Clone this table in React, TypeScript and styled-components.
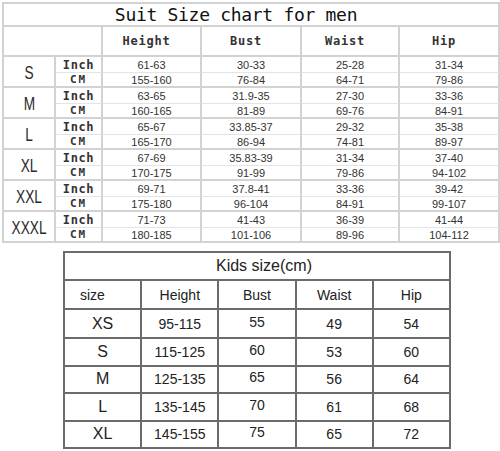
import React from 'react';
import styled, { createGlobalStyle } from 'styled-components';

const Global = createGlobalStyle`
  html, body { margin: 0; padding: 0; background: #fff; }
  body {
    font-family: "Liberation Sans", Arial, sans-serif;
    width: 500px;
    height: 451px;
    overflow: hidden;
    color: #333;
  }
`;

const Page = styled.div`
  display: flex;
  flex-direction: column;
  align-items: flex-start;
  gap: 8px;
  padding: 2px 2px 0 2px;
`;

const LINE = '#d2d2d2';
const SUBLINE = '#e4e4e4';

const MenTable = styled.table`
  width: 496px;
  table-layout: fixed;
  border-collapse: separate;
  border-spacing: 0;
  border-top: 2px solid ${LINE};
  border-left: 2px solid ${LINE};
`;

const Cell = styled.td`
  padding: 0;
  text-align: center;
  vertical-align: middle;
  border-right: 2px solid ${LINE};
  border-bottom: 2px solid ${LINE};
  white-space: nowrap;
  overflow: hidden;
`;

const TitleCell = styled(Cell)`
  height: 21px;
  padding-right: 30px;
  font-family: "DejaVu Sans Mono", "Liberation Mono", monospace;
  font-size: 18px;
  line-height: 21px;
  color: #111;
  letter-spacing: -0.3px;
`;

const HeadCell = styled(Cell)`
  height: 28px;
  padding-right: 10px;
  font-family: "DejaVu Sans Mono", "Liberation Mono", monospace;
  font-weight: bold;
  font-size: 12px;
  letter-spacing: 0.8px;
  color: #333;
`;

const SizeCell = styled(Cell)`
  font-size: 18px;
  color: #2a2a2a;
  padding-top: 3px;
`;

const Narrow = styled.span`
  display: inline-block;
  transform: scaleX(0.76);
`;

const UnitCell = styled(Cell)<{ $top?: boolean }>`
  font-family: "DejaVu Sans Mono", "Liberation Mono", monospace;
  font-weight: bold;
  color: #333;
  font-size: ${(p) => (p.$top ? '12px' : '11px')};
  letter-spacing: ${(p) => (p.$top ? '0.6px' : '2px')};
  height: ${(p) => (p.$top ? '15px' : '13px')};
  border-bottom: ${(p) => (p.$top ? `1px solid ${SUBLINE}` : `2px solid ${LINE}`)};
`;

const ValueCell = styled(Cell)<{ $top?: boolean }>`
  font-size: 11px;
  color: #333;
  height: ${(p) => (p.$top ? '15px' : '13px')};
  border-bottom: ${(p) => (p.$top ? `1px solid ${SUBLINE}` : `2px solid ${LINE}`)};
`;

const KidsTable = styled.table`
  margin-left: 61px;
  width: 388px;
  table-layout: fixed;
  border-collapse: collapse;
  border: 2px solid #6b6b6b;
`;

const KidRow = styled.tr<{ $h: number }>`
  height: ${(p) => p.$h}px;
`;

const KidCell = styled.td<{ $left?: boolean }>`
  padding: 0;
  border: 2px solid #6b6b6b;
  text-align: ${(p) => (p.$left ? 'left' : 'center')};
  padding-left: ${(p) => (p.$left ? '15px' : '0')};
  vertical-align: middle;
  font-size: 14px;
  line-height: 16px;
  color: #222;
`;

const KidTitle = styled(KidCell)`
  font-size: 16px;
  padding-left: 14px;
`;

const KidSize = styled(KidCell)`
  font-size: 16px;
`;

const KidValue = styled(KidCell)<{ $raise?: boolean }>`
  padding-bottom: ${(p) => (p.$raise ? '4px' : '0')};
`;

type Group = { size: string; inch: string[]; cm: string[] };

const men: Group[] = [
  { size: 'S', inch: ['61-63', '30-33', '25-28', '31-34'], cm: ['155-160', '76-84', '64-71', '79-86'] },
  { size: 'M', inch: ['63-65', '31.9-35', '27-30', '33-36'], cm: ['160-165', '81-89', '69-76', '84-91'] },
  { size: 'L', inch: ['65-67', '33.85-37', '29-32', '35-38'], cm: ['165-170', '86-94', '74-81', '89-97'] },
  { size: 'XL', inch: ['67-69', '35.83-39', '31-34', '37-40'], cm: ['170-175', '91-99', '79-86', '94-102'] },
  { size: 'XXL', inch: ['69-71', '37.8-41', '33-36', '39-42'], cm: ['175-180', '96-104', '84-91', '99-107'] },
  { size: 'XXXL', inch: ['71-73', '41-43', '36-39', '41-44'], cm: ['180-185', '101-106', '89-96', '104-112'] },
];

const kids = [
  ['XS', '95-115', '55', '49', '54'],
  ['S', '115-125', '60', '53', '60'],
  ['M', '125-135', '65', '56', '64'],
  ['L', '135-145', '70', '61', '68'],
  ['XL', '145-155', '75', '65', '72'],
];

export default function App() {
  return (
    <>
      <Global />
      <Page>
        <MenTable>
          <colgroup>
            <col style={{ width: 52 }} />
            <col style={{ width: 47 }} />
            <col style={{ width: 99 }} />
            <col style={{ width: 100 }} />
            <col style={{ width: 98 }} />
            <col style={{ width: 100 }} />
          </colgroup>
          <tbody>
            <tr>
              <TitleCell colSpan={6}>Suit Size chart for men</TitleCell>
            </tr>
            <tr>
              <HeadCell colSpan={2} />
              <HeadCell>Height</HeadCell>
              <HeadCell>Bust</HeadCell>
              <HeadCell>Waist</HeadCell>
              <HeadCell>Hip</HeadCell>
            </tr>
            {men.map((g) => (
              <React.Fragment key={g.size}>
                <tr>
                  <SizeCell rowSpan={2}>
                    <Narrow>{g.size}</Narrow>
                  </SizeCell>
                  <UnitCell $top>Inch</UnitCell>
                  {g.inch.map((v, i) => (
                    <ValueCell $top key={i}>{v}</ValueCell>
                  ))}
                </tr>
                <tr>
                  <UnitCell>CM</UnitCell>
                  {g.cm.map((v, i) => (
                    <ValueCell key={i}>{v}</ValueCell>
                  ))}
                </tr>
              </React.Fragment>
            ))}
          </tbody>
        </MenTable>
        <KidsTable>
          <tbody>
            <KidRow $h={28}>
              <KidTitle colSpan={5}>Kids size(cm)</KidTitle>
            </KidRow>
            <KidRow $h={29}>
              <KidCell $left>size</KidCell>
              <KidCell>Height</KidCell>
              <KidCell>Bust</KidCell>
              <KidCell>Waist</KidCell>
              <KidCell>Hip</KidCell>
            </KidRow>
            {kids.map((r, i) => (
              <KidRow $h={i === 0 ? 29 : 27.5} key={r[0]}>
                <KidSize>{r[0]}</KidSize>
                <KidCell>{r[1]}</KidCell>
                <KidValue $raise>{r[2]}</KidValue>
                <KidValue>{r[3]}</KidValue>
                <KidValue>{r[4]}</KidValue>
              </KidRow>
            ))}
          </tbody>
        </KidsTable>
      </Page>
    </>
  );
}
